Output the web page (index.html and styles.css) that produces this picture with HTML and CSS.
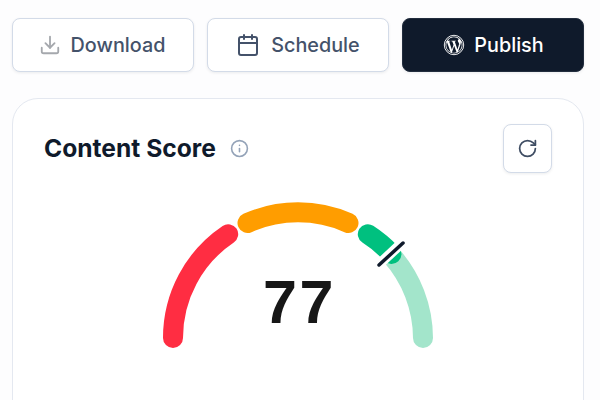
FILE: index.html
```html
<!DOCTYPE html>
<html lang="en">
<head>
<meta charset="utf-8">
<title>Content Score</title>
<link rel="stylesheet" href="styles.css">
</head>
<body>
<main class="page">
  <div class="actions">
    <button class="btn">
      <svg class="icon icon-muted" viewBox="0 0 24 24" fill="none" stroke="currentColor" stroke-width="2" stroke-linecap="round" stroke-linejoin="round"><path d="M21 15v4a2 2 0 0 1-2 2H5a2 2 0 0 1-2-2v-4"/><path d="M7 10l5 5 5-5"/><path d="M12 15V3"/></svg>
      <span>Download</span>
    </button>
    <button class="btn btn-wide">
      <svg class="icon icon-cal" viewBox="0 0 24 24" fill="none" stroke="currentColor" stroke-width="2" stroke-linecap="round" stroke-linejoin="round"><path d="M8 2v4"/><path d="M16 2v4"/><rect x="3" y="4" width="18" height="18" rx="2"/><path d="M3 10h18"/></svg>
      <span>Schedule</span>
    </button>
    <button class="btn btn-dark">
      <svg class="icon" viewBox="0 0 24 24" fill="none"><circle cx="12" cy="12" r="10.6" stroke="currentColor" stroke-width="1"/><circle cx="12" cy="12" r="9.3" fill="currentColor"/><path fill="#0f1a2b" d="M3.6 12c0 3.3 1.9 6.2 4.7 7.6L4.3 8.6A8.3 8.3 0 0 0 3.6 12zm14.1-.4c0-1-.4-1.8-.7-2.3-.4-.7-.8-1.3-.8-2 0-.8.6-1.5 1.4-1.500h.1A8.400 8.400 0 0 0 5 7.400h.5c.9 0 2.200-.1 2.200-.1.4 0 .5.6 0 .7l-1 .1 3 9 1.800-5.500-1.300-3.500-.9-.1c-.4 0-.4-.7.1-.7 0 0 1.400.1 2.200.1.9 0 2.200-.1 2.200-.1.4 0 .5.6 0 .7l-1 .1 3 8.900.8-2.700c.4-1.100.6-1.900.6-2.700zm-5.500 1.200l-2.500 7.300a8.400 8.400 0 0 0 5.200-.1l-.1-.1zm7.200-4.700l.1.9c0 .8-.2 1.800-.6 3l-2.600 7.300a8.400 8.400 0 0 0 3.100-11.200z"/></svg>
      <span>Publish</span>
    </button>
  </div>

  <section class="card">
    <header class="card-head">
      <div class="title-row">
        <h2 class="title">Content Score</h2>
        <svg class="info" viewBox="0 0 24 24" fill="none" stroke="currentColor" stroke-width="2" stroke-linecap="round"><circle cx="12" cy="12" r="10"/><path d="M12 16v-4"/><path d="M12 8h.01"/></svg>
      </div>
      <button class="refresh" aria-label="Refresh">
        <svg viewBox="0 0 24 24" fill="none" stroke="currentColor" stroke-width="2" stroke-linecap="round" stroke-linejoin="round"><path d="M21 12a9 9 0 1 1-9-9c2.500 0 4.900 1 6.700 2.700L21 8"/><path d="M21 3v5h-5"/></svg>
      </button>
    </header>

    <div class="gauge">
      <svg class="gauge-arc" viewBox="0 0 290 160" fill="none" stroke-width="20" stroke-linecap="round">
        <path stroke="#ff2d42" d="M20 145A125 125 0 0 1 75.200 41.200"/>
        <path stroke="#ff9d00" d="M94.500 30A125 125 0 0 1 195.500 30"/>
        <path stroke="#a3e5cb" d="M238 62A125 125 0 0 1 270 145"/>
        <path stroke="#00c07f" d="M214.800 41.200A125 125 0 0 1 238.500 61"/>
        <path stroke="#fff" stroke-width="10" stroke-linecap="butt" d="M221 76L250 49"/>
        <path stroke="#0f1a2b" stroke-width="3.500" d="M226 72L250 50"/>
      </svg>
      <div class="score">77</div>
    </div>
  </section>
</main>
</body>
</html>
```
FILE: styles.css
```css
* { box-sizing: border-box; }
html, body { margin: 0; height: 100%; }
body {
  background: #fdfdfe;
  font-family: Inter, "Liberation Sans", sans-serif;
  overflow: hidden;
}
.page { padding: 18px 16px 0 12px; }
.actions {
  display: grid;
  grid-template-columns: repeat(3, 1fr);
  gap: 13px;
}
.btn {
  height: 54px;
  display: flex;
  align-items: center;
  justify-content: center;
  gap: 10px;
  background: #fff;
  color: #44526a;
  border: 1.5px solid #d3dbe8;
  border-radius: 8px;
  box-shadow: 0 1px 3px rgba(15, 26, 43, .08);
  font: 500 19.800px Inter, sans-serif;
  padding: 0 2px 0 0;
}
.btn-wide { gap: 11px; padding-right: 0; }
.btn-dark {
  background: #0f1a2b;
  border-color: #222d3e;
  color: #fff;
  gap: 9px;
  padding: 0 0 0 1px;
}
.icon { width: 22px; height: 22px; flex: none; }
.icon-muted { color: #a5a8ad; }
.icon-cal { width: 24px; height: 24px; }
.card {
  margin-top: 26px;
  height: 340px;
  padding: 25px 31px 0;
  background: #fff;
  border: 1.5px solid #e4e8f0;
  border-radius: 26px;
}
.card-head {
  display: flex;
  align-items: center;
  justify-content: space-between;
}
.title-row { display: flex; align-items: center; gap: 14px; margin-bottom: 2px; }
.title {
  margin: 0;
  color: #0f1a2b;
  font: 700 24.600px Inter, sans-serif;
}
.info { width: 19px; height: 19px; color: #94a3b8; margin-top: 2px; }
.refresh {
  width: 49px;
  height: 49px;
  display: flex;
  align-items: center;
  justify-content: center;
  padding: 0;
  background: #fff;
  color: #3f4d63;
  border: 1.5px solid #d3dbe8;
  border-radius: 8px;
  box-shadow: 0 1px 3px rgba(15, 26, 43, .08);
}
.refresh svg { width: 21px; height: 21px; }
.gauge {
  position: relative;
  width: 290px;
  margin: 20px auto 0;
}
.gauge-arc { display: block; width: 290px; height: 160px; }
.score {
  position: absolute;
  left: 0;
  right: 0;
  top: 79px;
  text-align: center;
  color: #171717;
  font: 700 61px/1 "Liberation Sans", sans-serif;
  letter-spacing: 2.500px;
  text-indent: 3px;
}
```
